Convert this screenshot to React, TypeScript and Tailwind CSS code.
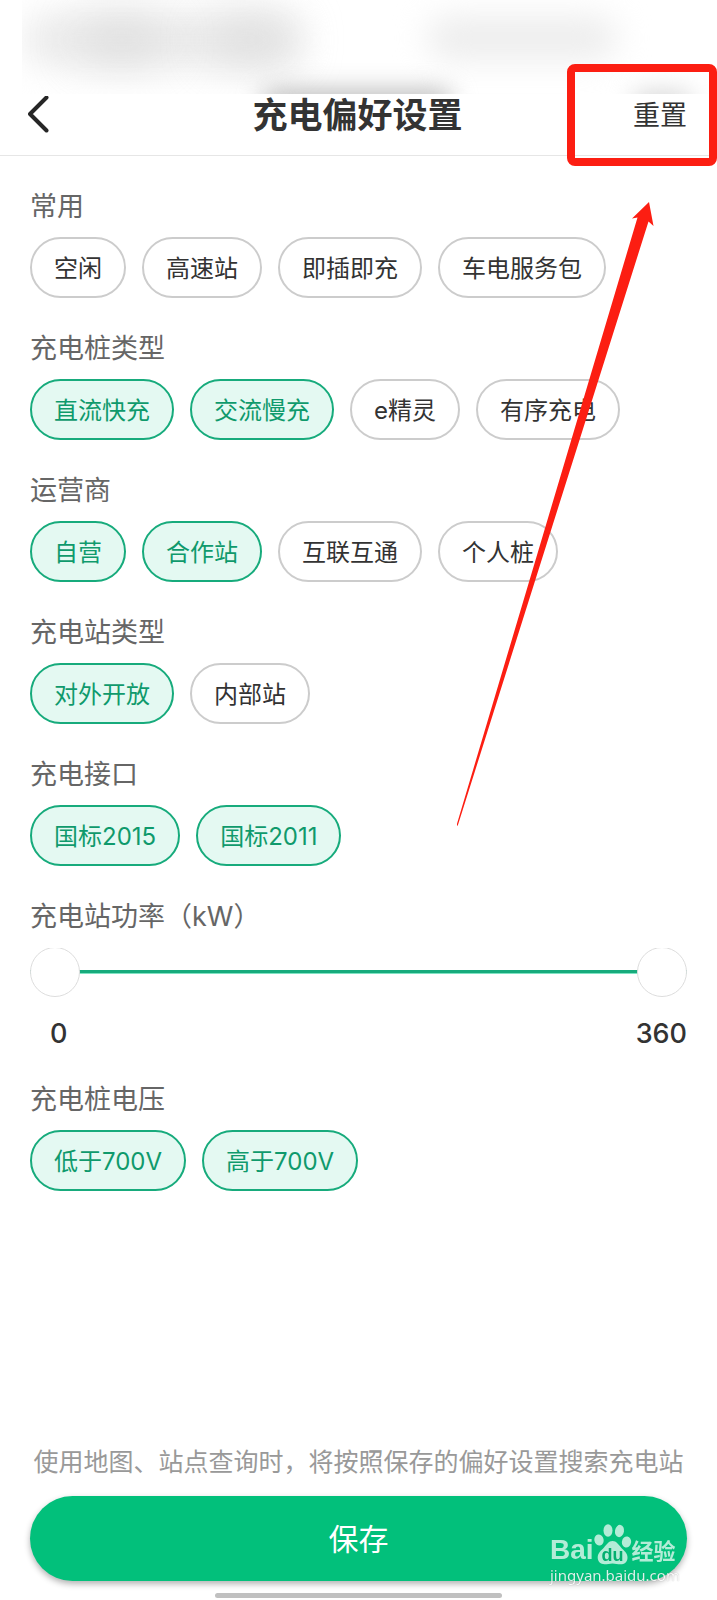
import { useState } from "react";
import clsx from "clsx";

interface Option {
  label: string;
  selected?: boolean;
}

interface FilterGroup {
  title: string;
  options: Option[];
}

const GROUPS: FilterGroup[] = [
  {
    title: "常用",
    options: [{ label: "空闲" }, { label: "高速站" }, { label: "即插即充" }, { label: "车电服务包" }],
  },
  {
    title: "充电桩类型",
    options: [
      { label: "直流快充", selected: true },
      { label: "交流慢充", selected: true },
      { label: "e精灵" },
      { label: "有序充电" },
    ],
  },
  {
    title: "运营商",
    options: [
      { label: "自营", selected: true },
      { label: "合作站", selected: true },
      { label: "互联互通" },
      { label: "个人桩" },
    ],
  },
  {
    title: "充电站类型",
    options: [{ label: "对外开放", selected: true }, { label: "内部站" }],
  },
  {
    title: "充电接口",
    options: [
      { label: "国标2015", selected: true },
      { label: "国标2011", selected: true },
    ],
  },
];

const VOLTAGE: FilterGroup = {
  title: "充电桩电压",
  options: [
    { label: "低于700V", selected: true },
    { label: "高于700V", selected: true },
  ],
};

const MAX_POWER = 360;

export default function App() {
  return (
    <div className="relative flex min-h-screen flex-col overflow-hidden bg-white font-['Inter','Noto_Sans_CJK_SC',sans-serif] text-[#333333]">
      <StatusBlur />
      <Header />

      <main className="flex flex-col gap-[30px] px-[30px] pt-[30px]">
        {GROUPS.map((group) => (
          <ChipGroup key={group.title} group={group} />
        ))}
        <PowerRange />
        <ChipGroup group={VOLTAGE} />
      </main>

      <Footer />
      <Pointer />
    </div>
  );
}

function StatusBlur() {
  return (
    <div aria-hidden="true" className="relative ml-[22px] h-[94px] overflow-hidden">
      <div className="absolute top-3 left-0 h-14 w-[280px] rounded-full bg-[#ededed] blur-lg" />
      <div className="absolute top-6 left-[60px] h-8 w-20 rounded-full bg-[#d8d8d8] blur-xl" />
      <div className="absolute top-6 left-[190px] h-8 w-20 rounded-full bg-[#d8d8d8] blur-xl" />
      <div className="absolute top-4 left-[405px] h-11 w-[190px] rounded-full bg-[#ededed] blur-lg" />
      <div className="absolute top-[90px] left-[240px] h-6 w-[190px] rounded-full bg-[#b8b8b8] blur-md" />
      <div className="absolute top-[92px] left-[610px] h-6 w-[60px] rounded-full bg-[#d4d4d4] blur-md" />
    </div>
  );
}

function Header() {
  return (
    <header className="grid grid-cols-[1fr_auto_1fr] items-center border-b border-[#e6e6e6] pr-[30px] pb-[19px] pl-7">
      <button type="button" aria-label="返回" className="justify-self-start">
        <svg width="22" height="38" viewBox="0 0 22 38" fill="none">
          <path d="M18.5 1.5 2 18l16.5 16.500" stroke="#262626" strokeWidth="4" strokeLinecap="round" strokeLinejoin="round" />
        </svg>
      </button>
      <h1 className="text-[35px] leading-[42px] font-bold">充电偏好设置</h1>
      <button type="button" className="justify-self-end pt-0.5 text-[27px] leading-[40px]">
        重置
      </button>
    </header>
  );
}

function ChipGroup({ group }: { group: FilterGroup }) {
  return (
    <section className="flex flex-col gap-[11px]">
      <GroupTitle>{group.title}</GroupTitle>
      <div className="flex flex-wrap gap-4">
        {group.options.map((option) => (
          <Chip key={option.label} option={option} />
        ))}
      </div>
    </section>
  );
}

function GroupTitle({ children }: { children: string }) {
  return <h2 className="pt-0.5 text-[27px] leading-[38px] text-[#666666]">{children}</h2>;
}

function Chip({ option }: { option: Option }) {
  const [on, setOn] = useState(Boolean(option.selected));

  return (
    <button
      type="button"
      aria-pressed={on}
      onClick={() => setOn(!on)}
      className={clsx(
        "h-[61px] rounded-full border-2 px-[22px] pt-0.5 text-2xl",
        on ? "border-[#17ab7c] bg-[#e4f9f2] text-[#0f9a6c]" : "border-[#cccccc] bg-white text-[#333333]"
      )}
    >
      {option.label}
    </button>
  );
}

const RANGE_CLASS =
  "pointer-events-none h-[50px] w-full appearance-none bg-transparent [grid-area:1/1] [&::-webkit-slider-thumb]:pointer-events-auto [&::-webkit-slider-thumb]:size-[50px] [&::-webkit-slider-thumb]:appearance-none [&::-webkit-slider-thumb]:rounded-full [&::-webkit-slider-thumb]:border [&::-webkit-slider-thumb]:border-[#dddddd] [&::-webkit-slider-thumb]:bg-white";

function PowerRange() {
  const [low, setLow] = useState(0);
  const [high, setHigh] = useState(MAX_POWER);

  return (
    <section className="flex flex-col">
      <GroupTitle>充电站功率（kW）</GroupTitle>
      <div className="mt-3 grid h-[49px] content-end overflow-hidden">
        <div className="h-1 self-center border-b border-[#7fe3c3] bg-[#17ab7c] [grid-area:1/1]" />
        <input
          type="range"
          aria-label="最小功率"
          min={0}
          max={MAX_POWER}
          value={low}
          onChange={(e) => setLow(Math.min(Number(e.target.value), high))}
          className={RANGE_CLASS}
        />
        <input
          type="range"
          aria-label="最大功率"
          min={0}
          max={MAX_POWER}
          value={high}
          onChange={(e) => setHigh(Math.max(Number(e.target.value), low))}
          className={RANGE_CLASS}
        />
      </div>
      <div className="mt-[22px] flex justify-between pl-5 text-[27px] leading-[30px] font-medium">
        <span>{low}</span>
        <span>{high}</span>
      </div>
    </section>
  );
}

function Footer() {
  return (
    <footer className="mt-auto flex flex-col px-[30px] pb-0.5">
      <p className="text-center text-[25px] leading-[30px] whitespace-nowrap text-[#999999]">
        使用地图、站点查询时，将按照保存的偏好设置搜索充电站
      </p>
      <div className="relative mt-[19px]">
        <button
          type="button"
          className="h-[85px] w-full rounded-full bg-[#02c07b] text-3xl text-white shadow-[0_3px_6px_rgba(0,0,0,0.3)]"
        >
          保存
        </button>
        <Watermark />
      </div>
      <div className="mt-3 h-[5px] w-[287px] self-center rounded-full bg-[#c0c0c0]" />
    </footer>
  );
}

function Watermark() {
  return (
    <div className="pointer-events-none absolute top-7 right-[10px] w-[127px] text-white">
      <div className="flex items-end opacity-70">
        <span className="font-['Liberation_Sans',sans-serif] text-[28px] leading-[30px] font-bold">Bai</span>
        <svg width="38" height="41" viewBox="0 0 38 41" fill="currentColor" className="shrink-0">
          <ellipse cx="5" cy="16" rx="4.600" ry="5.600" transform="rotate(-12 5 16)" />
          <ellipse cx="14" cy="6.500" rx="4.500" ry="6.200" />
          <ellipse cx="25.500" cy="7" rx="4.500" ry="6.200" transform="rotate(10 25.500 7)" />
          <ellipse cx="32.500" cy="18" rx="4.600" ry="5.600" transform="rotate(10 32.500 18)" />
          <path d="M18.500 17c4 0 6 3.500 8.500 6.500 3 3.300 6.500 5.500 6.500 10.200 0 4.300-3.200 6.600-7 6.600-3 0-5-.9-8-.9s-5 .9-8 .9c-3.800 0-6.800-2.600-6.800-6.700 0-4.600 3.400-7 6.300-10.100 2.700-3 4.500-6.500 8.500-6.500z" />
          <text x="18.500" y="37" textAnchor="middle" fontSize="18" fontWeight="700" fontFamily="Liberation Sans, sans-serif" fill="#02a86b">
            du
          </text>
        </svg>
        <span className="text-[22px] leading-[28px] font-bold">经验</span>
      </div>
      <span className="block font-['Noto_Sans',sans-serif] text-[15px] leading-[20px] opacity-85 [text-shadow:0_0_1px_rgba(0,0,0,0.4)]">
        jingyan.baidu.com
      </span>
    </div>
  );
}

// red frame round the reset button, with the arrow that leads up to it
function Pointer() {
  return (
    <div aria-hidden="true" className="pointer-events-none absolute top-16 right-0">
      <div className="ml-auto h-[102px] w-[150px] rounded-lg border-8 border-[#fc1e12]" />
      <svg width="197" height="624" viewBox="0 0 197 624" fill="#fc1e12" className="mt-9 mr-[63px]">
        <path d="M192 0 175 16.500l5.500-1L-.5 623.500l1.200.3L191.500 19.500l5 4.500z" />
      </svg>
    </div>
  );
}
